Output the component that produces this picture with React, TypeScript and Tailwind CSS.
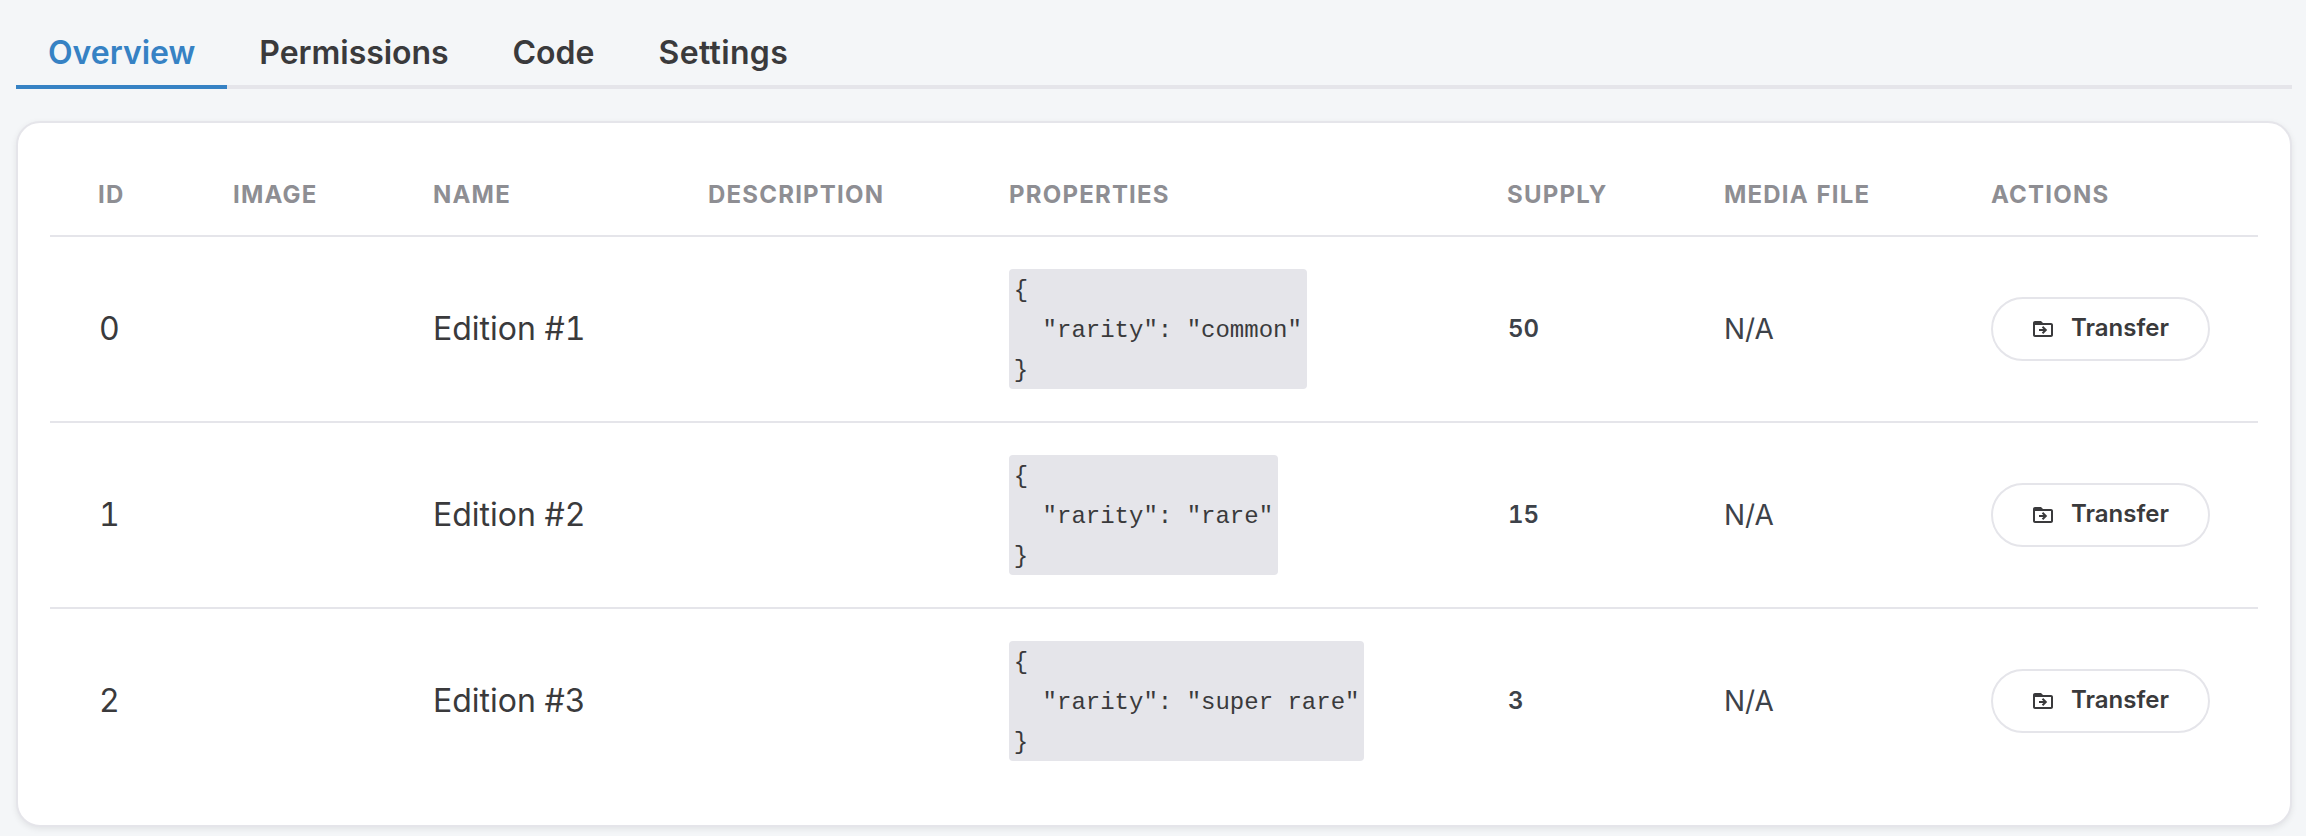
const tabs = [
  { label: "Overview", tone: "border-[#3682c4] text-[#3682c4]" },
  { label: "Permissions", tone: "border-transparent text-[#3a3a3c] tracking-[-0.05px]" },
  { label: "Code", tone: "border-transparent text-[#3a3a3c]" },
  { label: "Settings", tone: "border-transparent text-[#3a3a3c] tracking-[0.35px]" },
];

const columns = [
  { label: "ID", width: "w-[135px]" },
  { label: "IMAGE", width: "w-[200px]" },
  { label: "NAME", width: "w-[275px]" },
  { label: "DESCRIPTION", width: "w-[301px]" },
  { label: "PROPERTIES", width: "w-[498px]" },
  { label: "SUPPLY", width: "w-[217px]" },
  { label: "MEDIA FILE", width: "w-[267px]" },
  { label: "ACTIONS", width: "w-[315px]" },
];

const editions = [
  { id: 0, name: "Edition #1", rarity: "common", supply: 50 },
  { id: 1, name: "Edition #2", rarity: "rare", supply: 15 },
  { id: 2, name: "Edition #3", rarity: "super rare", supply: 3 },
];

function Tabs() {
  return (
    <nav className="flex h-[89px] border-b-4 border-[#e5e5ea]">
      {tabs.map((tab) => (
        <button
          key={tab.label}
          className={`-mb-1 h-[89px] border-b-4 px-8 pt-[21px] text-[32px] leading-[48px] font-semibold ${tab.tone}`}
        >
          {tab.label}
        </button>
      ))}
    </nav>
  );
}

function FolderMoveIcon() {
  return (
    <svg viewBox="0 0 24 24" fill="currentColor" className="mr-4 size-6">
      <path d="M20 6h-8l-2-2H4c-1.1 0-2 .9-2 2v12c0 1.1.9 2 2 2h16c1.1 0 2-.9 2-2V8c0-1.1-.9-2-2-2zm0 12H4V8h16v10z" />
      <path d="M12.2 9l-1.4 1.4 1.6 1.6H8v2h4.4l-1.6 1.6 1.4 1.4 4-4z" />
    </svg>
  );
}

function TransferButton() {
  return (
    <button className="flex h-16 w-[219px] items-center rounded-full border-2 border-[#e5e5ea] pl-[38px] text-[24px] font-semibold text-[#3a3a3c]">
      <FolderMoveIcon />
      <span className="pb-0.5 leading-8">Transfer</span>
    </button>
  );
}

export default function App() {
  return (
    <main className="h-[836px] w-[2306px] overflow-hidden bg-[#f4f6f8] pr-[14px] pl-4 font-['Inter',sans-serif] text-[#3a3a3c]">
      <Tabs />
      <section className="mt-8 h-[706px] rounded-3xl border-2 border-[#e5e5ea] bg-white p-8 shadow-[0_2px_6px_rgba(0,0,0,0.08)]">
        <table className="w-full table-fixed border-collapse text-left tabular-nums">
          <thead>
            <tr className="h-[82px] shadow-[inset_0_-2px_0_#e5e5ea]">
              {columns.map((c) => (
                <th
                  key={c.label}
                  className={`${c.width} p-0 pb-[3px] pl-12 text-[24px] leading-8 font-bold tracking-[0.05em] text-[#8e8e93]`}
                >
                  {c.label}
                </th>
              ))}
            </tr>
          </thead>
          <tbody>
            {editions.map((e) => (
              <tr key={e.id} className="h-[186px] shadow-[inset_0_-2px_0_#e5e5ea] last:shadow-none">
                <td className="pb-0.5 pl-[49px] text-[32px] leading-[48px]">{e.id}</td>
                <td />
                <td className="pb-0.5 pl-12 text-[32px] leading-[48px]">{e.name}</td>
                <td />
                <td className="pt-8 pl-12 align-top">
                  <pre className="h-[120px] w-fit rounded bg-[#e5e5ea] px-[4.8px] pt-0.5 font-['Liberation_Mono',monospace] text-[24px] leading-10">
                    {JSON.stringify({ rarity: e.rarity }, null, 2)}
                  </pre>
                </td>
                <td className="pb-0.5 pl-[49px] text-[24px] leading-8 font-semibold text-[#3d4249]">{e.supply}</td>
                <td className="pb-0.5 pl-12 text-[28px] leading-10 text-[#3d4249]">N/A</td>
                <td className="pt-[60px] pl-12 align-top">
                  <TransferButton />
                </td>
              </tr>
            ))}
          </tbody>
        </table>
      </section>
    </main>
  );
}
